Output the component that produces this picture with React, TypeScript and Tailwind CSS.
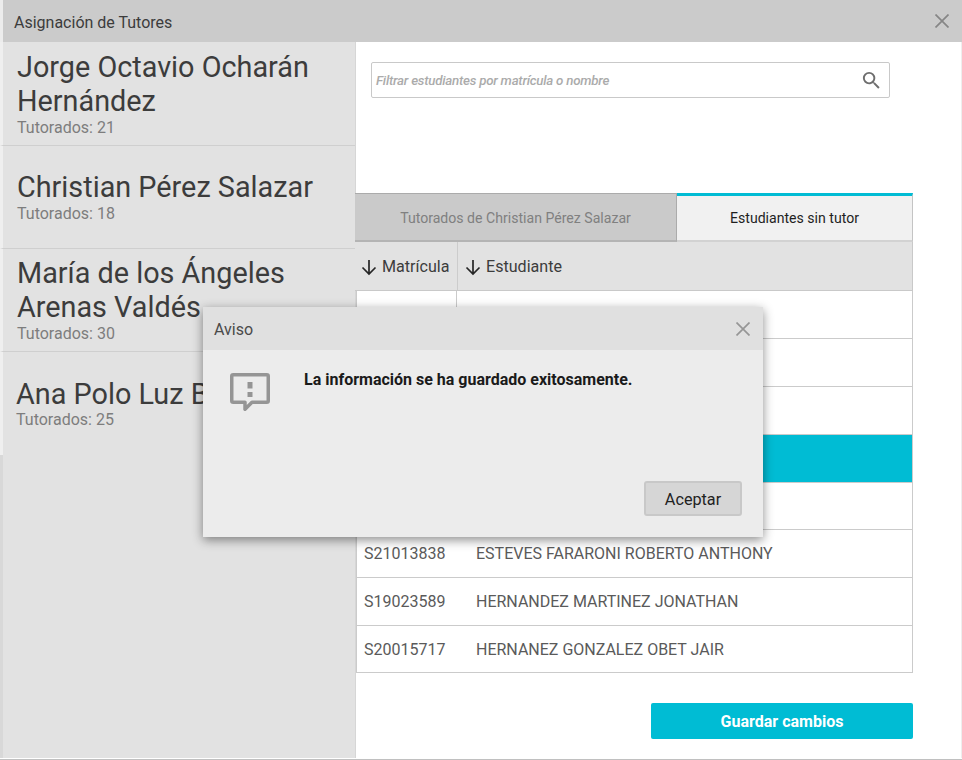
const roboto = { fontFamily: 'Roboto, "Liberation Sans", sans-serif' };

function Arrow() {
  return (
    <svg width="18" height="18" viewBox="0 0 18 18" className="shrink-0" fill="none" stroke="#262626" strokeWidth="1.7">
      <path d="M9 2V16M2.5 9.5L9 16L15.5 9.5" />
    </svg>
  );
}

function CloseX({ color, size }: { color: string; size: number }) {
  return (
    <svg width={size} height={size} viewBox="0 0 14 14" fill="none" stroke={color} strokeWidth="1.7">
      <path d="M0.5 0.5L13.5 13.5M13.5 0.5L0.5 13.5" />
    </svg>
  );
}

const tutors = [
  { name: ["Jorge Octavio Ocharán", "Hernández"], count: 21, box: "h-[104px] pt-[8px] pl-[14px] border-b border-b-[#cfcfcf]", sub: "mt-[1px]" },
  { name: ["Christian Pérez Salazar"], count: 18, box: "h-[103px] pt-[24px] pl-[14px] border-b border-b-[#cfcfcf]", sub: "mt-[1px]" },
  { name: ["María de los Ángeles", "Arenas Valdés"], count: 30, box: "h-[103px] pt-[7px] pl-[14px] border-b border-b-[#cfcfcf]", sub: "mt-[1px]" },
  { name: ["Ana Polo Luz Bustamante"], count: 25, box: "h-[103px] pt-[25px] pl-[13px]", sub: "" },
];

const rows = [
  { m: "", n: "", h: "h-[48px]" },
  { m: "", n: "", h: "h-[48px]" },
  { m: "", n: "", h: "h-[48px]" },
  { m: "", n: "", h: "h-[48px]", selected: true },
  { m: "", n: "", h: "h-[47px]" },
  { m: "S21013838", n: "ESTEVES FARARONI ROBERTO ANTHONY", h: "h-[48px]" },
  { m: "S19023589", n: "HERNANDEZ MARTINEZ JONATHAN", h: "h-[48px]" },
  { m: "S20015717", n: "HERNANEZ GONZALEZ OBET JAIR", h: "h-[47px] pt-[1px]" },
];

export default function App() {
  return (
    <div style={roboto} className="relative w-[962px] h-[760px] overflow-hidden bg-[#ececec] pl-[3px]">
      <div className="h-[42px] bg-[#cbcbcb] flex items-center justify-between pl-[11px] pr-[13px]">
        <span className="text-[16px] leading-[18px] pt-[4px] text-[#3c3c3c]">Asignación de Tutores</span>
        <CloseX color="#868686" size={14} />
      </div>
      <div className="flex h-[716px] bg-white">
        <div className="w-[356px] -ml-[3px] shrink-0 bg-[#e2e2e2] border-r border-r-[#d6d6d6] flex flex-col">
          {tutors.map((t) => (
            <div key={t.count} className={`${t.box} border-l-[3px] border-l-[#efefef] overflow-hidden`}>
              <div className="text-[28.8px] leading-[34px] text-[#3c3c3c] whitespace-nowrap">
                {t.name.map((l) => (
                  <div key={l}>{l}</div>
                ))}
              </div>
              <div className={`${t.sub} text-[16px] leading-[18px] text-[#7d7d7d]`}>Tutorados: {t.count}</div>
            </div>
          ))}
          <div className="flex-1 border-l-[3px] border-l-[#d8d8d8]" />
        </div>
        <div className="flex-1 flex flex-col pr-[48px] border-r border-r-[#eeeeee]">
          <div className="h-[151px] shrink-0 pt-[20px] pl-[15px]">
            <div className="w-[519px] h-[36px] border border-[#c9c9c9] rounded-[2px] flex items-center justify-between pl-[4px] pr-[6px] bg-white">
              <span className="text-[13.33px] pt-[1px] italic font-medium text-[#ababab] tracking-[-0.25px]">Filtrar estudiantes por matrícula o nombre</span>
              <svg width="23" height="23" viewBox="0 0 24 24" fill="#6e6e6e">
                <path d="M15.5 14h-.79l-.28-.27A6.47 6.47 0 0 0 16 9.5 6.5 6.5 0 1 0 9.5 16c1.61 0 3.09-.59 4.23-1.57l.27.28v.79l5 4.99L20.49 19l-4.99-5zm-6 0C7.01 14 5 11.99 5 9.5S7.01 5 9.5 5 14 7.01 14 9.5 11.99 14 9.5 14z" />
              </svg>
            </div>
          </div>
          <div className="flex h-[49px] shrink-0 -ml-[1px]">
            <div className="w-[322px] pt-[3px] bg-[#cacaca] border-t border-b-2 border-b-[#b4b4b4] border-r border-[#ababab] flex items-center justify-center text-[14.1px] text-[#808080]">
              Tutorados de Christian Pérez Salazar
            </div>
            <div className="flex-1 pt-[2px] bg-[#f1f1f1] border-t-[3px] border-t-[#00bcd4] border-r border-r-[#c4c4c4] border-b-2 border-b-[#d2d2d2] flex items-center justify-center text-[14.1px] text-[#1f1f1f]">
              Estudiantes sin tutor
            </div>
          </div>
          <div className="flex h-[49px] shrink-0 -ml-[1px] pt-[2px] bg-[#e2e2e2] border-b border-r border-[#c9c9c9] text-[16.1px] text-[#3c3c3c]">
            <div className="w-[103px] shrink-0 flex items-center gap-[4px] pl-[5px] -mt-[2px] pt-[2px] border-r border-[#cccccc]">
              <Arrow />
              <span>Matrícula</span>
            </div>
            <div className="flex-1 flex items-center gap-[4px] pl-[6px]">
              <Arrow />
              <span>Estudiante</span>
            </div>
          </div>
          {rows.map((r, i) => (
            <div
              key={i}
              className={`flex shrink-0 ${r.h} border-l border-r border-b border-[#cbcbcb] text-[16px] text-[#5a5a5a] ${r.selected ? "bg-[#00bcd4]" : "bg-white"}`}
            >
              <div className={`w-[100px] shrink-0 flex items-center pl-[7px] ${i < 3 ? "border-r border-[#cbcbcb]" : ""}`}>{r.m}</div>
              <div className="flex-1 flex items-center pl-[19px]">{r.n}</div>
            </div>
          ))}
          <div className="flex justify-end mt-[30px]">
            <button className="w-[262px] h-[36px] pt-[2px] bg-[#00bcd4] rounded-[2px] text-white font-bold text-[16px]">Guardar cambios</button>
          </div>
        </div>
      </div>
      <div className="h-[2px] -ml-[3px] bg-white border-b border-b-[#c0c0c0]" />

      <div className="absolute left-[203px] top-[307px] w-[560px] h-[230px] bg-[#ececec] shadow-[0_3px_10px_rgba(0,0,0,0.45)] flex flex-col">
        <div className="h-[43px] shrink-0 bg-[#e0e0e0] flex items-center justify-between pl-[11px] pr-[13px]">
          <span className="text-[16px] leading-[18px] pt-[3px] text-[#4a4a4a]">Aviso</span>
          <CloseX color="#969696" size={14} />
        </div>
        <div className="flex-1 flex flex-col pl-[25px] pr-[21px]">
          <div className="flex flex-1 pt-[21px]">
            <svg width="44" height="44" viewBox="0 0 44 44" className="shrink-0" fill="none">
              <path d="M5.25 3.75h33.5a1.5 1.5 0 0 1 1.5 1.5v24.5a1.5 1.5 0 0 1-1.5 1.5H24l-7 7v-7H5.25a1.5 1.5 0 0 1-1.5-1.5V5.25a1.5 1.5 0 0 1 1.5-1.5z" stroke="#959595" strokeWidth="3.5" strokeLinejoin="round" />
              <rect x="19.5" y="11" width="5" height="6.5" fill="#959595" />
              <rect x="19.5" y="21" width="5" height="5" fill="#959595" />
            </svg>
            <div className="ml-[32px] font-bold text-[16px] leading-[18px] text-[#1a1a1a]">La información se ha guardado exitosamente.</div>
          </div>
          <div className="flex justify-end pb-[21px]">
            <button className="w-[98px] h-[35px] pt-[3px] bg-[#d6d6d6] border-2 border-[#c8c8c8] rounded-[3px] text-[16.2px] text-[#222222]">Aceptar</button>
          </div>
        </div>
      </div>
    </div>
  );
}
